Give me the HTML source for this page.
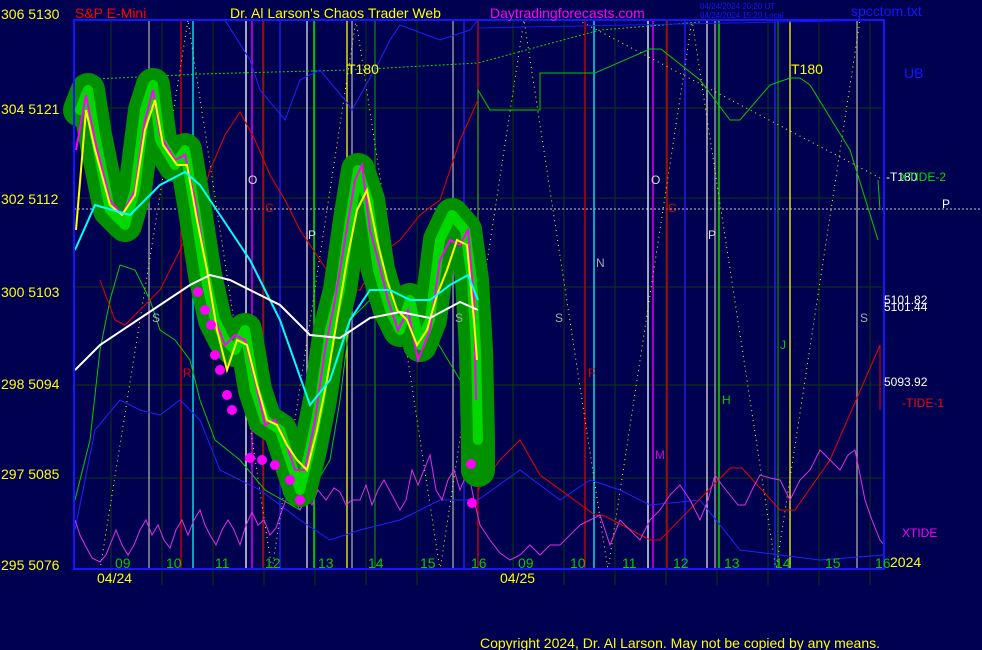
<!DOCTYPE html><html><head><style>body{margin:0;background:#000050;}svg{display:block}text{font-family:"Liberation Sans",sans-serif;font-size:14px}.s{font-size:12px}</style></head><body>
<svg width="982" height="650" viewBox="0 0 982 650" xmlns="http://www.w3.org/2000/svg">
<rect width="982" height="650" fill="#000050"/>
<g stroke="#0a3a0a" stroke-width="1">
<line x1="74" y1="108" x2="884" y2="108"/><line x1="74" y1="198" x2="884" y2="198"/><line x1="74" y1="287" x2="884" y2="287"/><line x1="74" y1="385" x2="884" y2="385"/><line x1="74" y1="478" x2="884" y2="478"/>
<line x1="111" y1="20" x2="111" y2="585"/><line x1="162" y1="20" x2="162" y2="585"/><line x1="213" y1="20" x2="213" y2="585"/><line x1="264" y1="20" x2="264" y2="585"/><line x1="315" y1="20" x2="315" y2="585"/><line x1="366" y1="20" x2="366" y2="585"/><line x1="417" y1="20" x2="417" y2="585"/><line x1="513" y1="20" x2="513" y2="585"/><line x1="564" y1="20" x2="564" y2="585"/><line x1="615" y1="20" x2="615" y2="585"/><line x1="666" y1="20" x2="666" y2="585"/><line x1="717" y1="20" x2="717" y2="585"/><line x1="768" y1="20" x2="768" y2="585"/><line x1="819" y1="20" x2="819" y2="585"/><line x1="870" y1="20" x2="870" y2="585"/>
</g>
<line x1="74" y1="209" x2="982" y2="209" stroke="#ccc" stroke-dasharray="2,2"/>
<g stroke-width="1.3">
<line x1="181" y1="20" x2="181" y2="570" stroke="#d00"/><line x1="193" y1="20" x2="193" y2="570" stroke="#0ff"/><line x1="149" y1="20" x2="149" y2="570" stroke="#aaa"/>
<line x1="246" y1="20" x2="246" y2="570" stroke="#fff"/><line x1="252" y1="20" x2="252" y2="570" stroke="#f0f"/><line x1="263" y1="20" x2="263" y2="570" stroke="#d00"/><line x1="280" y1="20" x2="280" y2="570" stroke="#22f"/>
<line x1="307" y1="20" x2="307" y2="570" stroke="#ddd"/><line x1="314" y1="20" x2="314" y2="570" stroke="#0f0"/><line x1="347" y1="20" x2="347" y2="570" stroke="#ff0"/><line x1="352" y1="20" x2="352" y2="570" stroke="#aaa"/><line x1="375" y1="20" x2="375" y2="570" stroke="#080"/>
<line x1="453" y1="20" x2="453" y2="570" stroke="#aaa"/><line x1="464" y1="20" x2="464" y2="570" stroke="#22f"/><line x1="478" y1="20" x2="478" y2="570" stroke="#d00"/>
<line x1="585" y1="20" x2="585" y2="570" stroke="#d00"/><line x1="594" y1="20" x2="594" y2="570" stroke="#0ff"/><line x1="648" y1="20" x2="648" y2="570" stroke="#fff"/><line x1="653" y1="20" x2="653" y2="570" stroke="#f0f"/><line x1="667" y1="20" x2="667" y2="570" stroke="#d00"/><line x1="685" y1="20" x2="685" y2="570" stroke="#22f"/>
<line x1="707" y1="20" x2="707" y2="570" stroke="#ddd"/><line x1="715" y1="20" x2="715" y2="570" stroke="#aaa"/><line x1="719" y1="20" x2="719" y2="570" stroke="#0f0"/><line x1="775" y1="20" x2="775" y2="570" stroke="#22f"/><line x1="778" y1="20" x2="778" y2="570" stroke="#080"/><line x1="790" y1="20" x2="790" y2="570" stroke="#ff0"/><line x1="857" y1="20" x2="857" y2="570" stroke="#aaa"/>
</g>
<g fill="none" stroke-width="1">
<polyline stroke="#ff0" stroke-dasharray="1,4" points="100,570 188,20 272,570 356,20 440,570 524,20 608,570 692,20 776,570 860,20"/>
<polyline stroke="#ff0" stroke-dasharray="1,4" points="578,20 880,178"/>
<polyline stroke="#0d0" stroke-dasharray="2,2" points="75,80 200,74 350,70 478,63 600,30 700,22"/>
<polyline stroke="#22f" points="225,20 250,60 260,90 285,120 300,80 320,70 345,100 352,110 380,60 390,40 400,25 440,40 470,30 478,20"/>
<polyline stroke="#22f" points="75,530 95,430 120,400 140,410 160,415 180,400 200,420 220,470 260,490 300,520 330,540 360,530 400,520 440,500 478,500 520,470 560,500 590,480 620,490 650,505 700,500 740,550 780,555 820,560 884,555"/>
<polyline stroke="#0c0" points="75,500 90,440 100,350 110,300 120,265 135,270 150,300 160,330 175,340 190,360 200,400 215,440 240,460 265,490 300,510 330,460 340,400 350,320 370,300 400,300 430,330 460,380 478,400 478,90 490,110 540,110 540,73 595,73 650,49 661,49 700,80 730,120 740,120 770,85 790,78 800,78 810,85 850,150 878,240"/>
<polyline stroke="#0c0" points="878,180 880,210"/>
<polyline stroke="#e00" points="100,280 115,320 125,325 140,310 160,290 180,250 200,205 210,170 225,135 240,112 255,140 270,175 285,200 300,230 320,260 340,290 360,290 380,255 400,240 420,215 440,200 460,140 478,100"/>
<polyline stroke="#e00" points="478,490 500,460 520,440 540,475 595,515 605,516 650,540 660,540 730,468 742,468 780,510 795,510 830,460 880,345 880,410"/>
<polyline stroke="#e030e0" points="75,520 80,535 85,545 92,558 100,562 106,555 110,545 116,530 122,545 128,555 134,545 140,530 146,520 152,535 158,525 164,540 170,548 176,530 182,520 188,535 194,520 200,510 205,525 210,535 216,545 222,530 228,520 234,530 240,545 246,525 252,512 258,525 264,520 270,535 276,528 282,510 288,495 294,500 300,510 306,495 312,505 318,490 326,500 334,488 340,492 346,505 352,500 360,500 366,485 372,505 378,490 384,480 392,495 400,510 406,500 412,470 418,485 424,470 430,455 436,490 442,500 448,480 454,470 460,490 468,470 474,500 480,525 490,540 500,553 510,560 520,555 530,545 540,555 550,545 560,545 570,535 580,525 590,520 600,515 610,545 620,520 630,530 640,540 650,520 660,510 670,495 680,485 690,500 700,520 708,500 715,475 722,485 730,495 738,505 745,505 752,490 760,475 770,478 780,480 790,500 800,480 810,470 820,450 830,460 840,470 848,455 855,450 865,500 872,520 880,540 884,545"/>
</g>
<g stroke-linecap="round" stroke-linejoin="round" fill="none">
<polyline stroke="#009000" stroke-width="34" points="80,110 88,90 95,135 110,210 125,225 135,190 145,110 153,85 160,140 175,165 185,150 195,210 205,275 215,320 225,340 235,350 245,330 255,390 265,420 280,430 290,460 300,490 310,450 320,400 330,330 340,290 350,220 358,170 368,200 378,270 390,310 400,330 410,300 420,345 430,320 440,240 452,215 465,230 472,280 476,350 478,440 478,470"/>
<polyline stroke="#00d800" stroke-width="10" points="80,110 88,90 95,135 110,210 125,225 135,190 145,110 153,85 160,140 175,165 185,150 195,210 205,275 215,320 225,340 235,350 245,330 255,390 265,420 280,430 290,460 300,490 310,450 320,400 330,330 340,290 350,220 358,170 368,200 378,270 390,310 400,330 410,300 420,345 430,320 440,240 452,215 465,230 472,280 476,350 478,440"/>
</g>
<g fill="none" stroke-width="2">
<polyline stroke="#f0f" points="76,150 86,95 95,140 110,200 122,215 135,190 145,120 153,90 160,135 175,160 185,155 195,200 205,260 215,320 225,345 235,335 245,340 255,380 265,425 275,420 285,440 295,470 305,470 315,420 325,350 335,300 345,240 355,180 362,165 370,230 378,260 388,300 398,330 408,310 418,360 430,330 440,260 450,240 460,245 468,230 474,300 476,400"/>
<polyline stroke="#ff0" points="76,230 86,110 95,150 110,205 122,215 135,195 145,130 155,100 163,145 177,165 187,165 197,220 207,270 217,330 227,370 237,340 247,345 257,385 267,420 277,425 287,445 297,460 307,470 317,430 327,380 337,320 347,260 357,210 367,190 377,240 387,280 397,310 407,320 417,345 427,330 437,295 447,270 457,240 467,245 474,320 477,360"/>
<polyline stroke="#0ff" points="75,250 95,205 130,215 160,185 185,172 200,185 220,215 250,260 280,320 310,405 330,380 350,320 370,290 390,290 410,300 430,300 450,285 468,275 478,300"/>
<polyline stroke="#fff" points="75,370 100,345 130,325 160,305 190,285 210,275 230,280 250,290 280,305 310,335 340,338 370,318 400,312 430,318 460,302 478,310"/>
</g>
<g fill="#f0f">
<circle cx="198" cy="292" r="5"/><circle cx="205" cy="310" r="5"/><circle cx="211" cy="325" r="5"/><circle cx="215" cy="355" r="5"/><circle cx="220" cy="370" r="5"/><circle cx="227" cy="395" r="5"/><circle cx="232" cy="410" r="5"/><circle cx="250" cy="458" r="5"/><circle cx="262" cy="460" r="5"/><circle cx="275" cy="465" r="5"/><circle cx="290" cy="480" r="5"/><circle cx="300" cy="500" r="5"/><circle cx="471" cy="464" r="5"/><circle cx="472" cy="503" r="5"/>
</g>
<rect x="74" y="20" width="810" height="549" fill="none" stroke="#1515ff" stroke-width="2"/>
<line x1="478" y1="28" x2="884" y2="20" stroke="#1515ff" stroke-width="1"/>
<g fill="#ff0"><text x="1" y="19">306  5130</text><text x="1" y="114">304  5121</text><text x="1" y="204">302  5112</text><text x="1" y="297">300  5103</text><text x="1" y="389">298  5094</text><text x="1" y="479">297  5085</text><text x="1" y="570">295  5076</text>
<text x="230" y="18">Dr. Al Larson's Chaos Trader Web</text><text x="347" y="74">T180</text><text x="791" y="74">T180</text><text x="890" y="567">2024</text><text x="97" y="583">04/24</text><text x="500" y="583">04/25</text><text x="480" y="648">Copyright 2024, Dr. Al Larson. May not be copied by any means.</text></g>
<text x="75" y="18" fill="#f00">S&amp;P E-Mini</text>
<text x="490" y="18" fill="#f0f">Daytradingforecasts.com</text>
<text x="700" y="9" fill="#1515ff" style="font-size:8px">04/24/2024 20:20  UT</text><text x="700" y="18" fill="#1515ff" style="font-size:8px">04/24/2024 15:20  Local</text>
<text x="851" y="16" fill="#1515ff">spcctom.txt</text>
<text x="904" y="78" fill="#1515ff">UB</text>
<text x="886" y="181" fill="#fff" class="s">-T180</text><text x="900" y="181" fill="#0d0" class="s">XTIDE-2</text><text x="942" y="208" fill="#fff" class="s">P</text>
<text x="884" y="304" fill="#fff" class="s">5101.82</text><text x="884" y="311" fill="#fff" class="s">5101.44</text><text x="884" y="386" fill="#fff" class="s">5093.92</text><text x="902" y="407" fill="#f00" class="s">-TIDE-1</text><text x="902" y="537" fill="#f0f" class="s">XTIDE</text>
<g fill="#0c0"><text x="115" y="568">09</text><text x="166" y="568">10</text><text x="215" y="568">11</text><text x="265" y="568">12</text><text x="318" y="568">13</text><text x="368" y="568">14</text><text x="420" y="568">15</text><text x="471" y="568">16</text><text x="518" y="568">09</text><text x="570" y="568">10</text><text x="622" y="568">11</text><text x="673" y="568">12</text><text x="724" y="568">13</text><text x="775" y="568">14</text><text x="825" y="568">15</text><text x="875" y="568">16</text><text x="722" y="404" class="s">H</text><text x="780" y="349" class="s">J</text></g>
<g fill="#ddd" class="s"><text x="248" y="184" class="s">O</text><text x="308" y="239" class="s">P</text><text x="651" y="184" class="s">O</text><text x="708" y="239" class="s">P</text></g>
<g fill="#aaa"><text x="152" y="322" class="s">S</text><text x="455" y="322" class="s">S</text><text x="555" y="322" class="s">S</text><text x="860" y="322" class="s">S</text><text x="596" y="267" class="s">N</text></g>
<g fill="#d00"><text x="265" y="212" class="s">C</text><text x="668" y="212" class="s">C</text><text x="183" y="377" class="s">R</text><text x="588" y="377" class="s">F</text></g>
<text x="655" y="459" fill="#c0c" class="s">M</text>
</svg></body></html>
